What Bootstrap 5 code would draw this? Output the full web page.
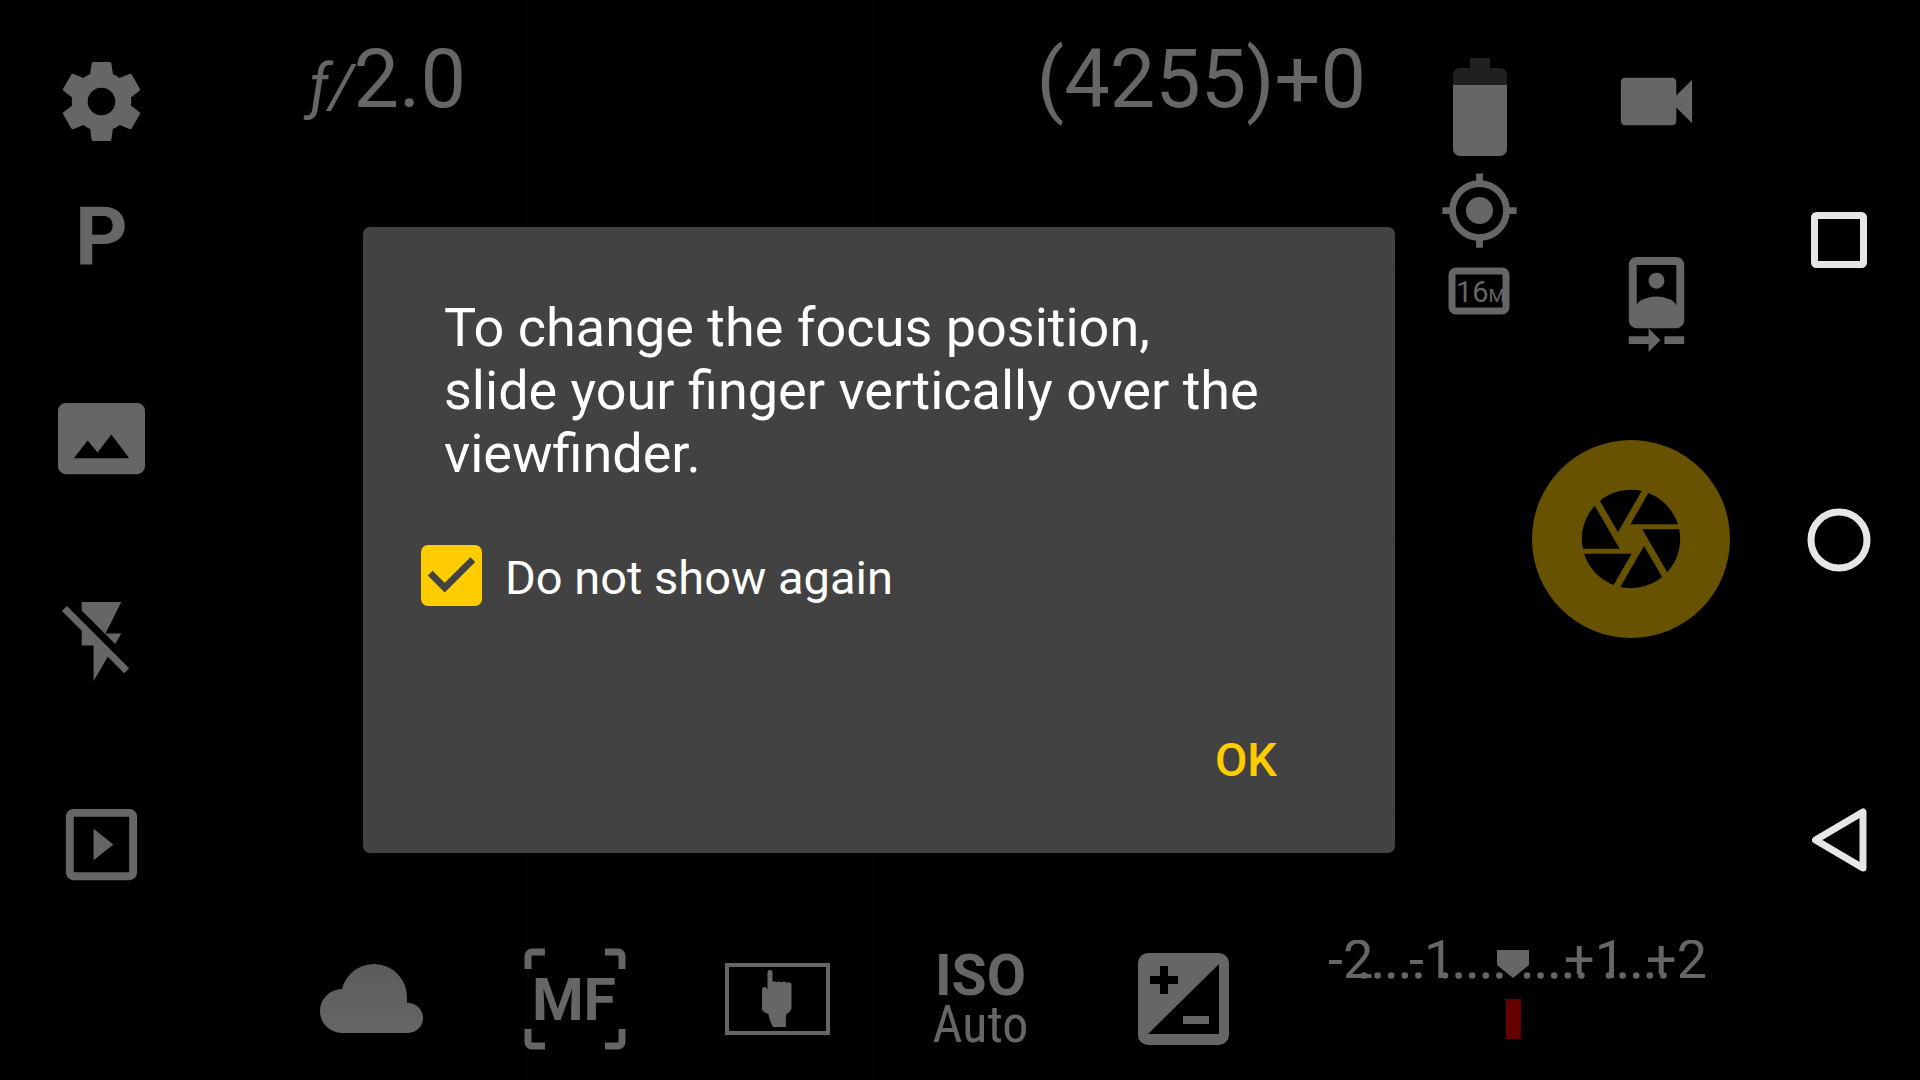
<!DOCTYPE html>
<html lang="en">
<head>
<meta charset="utf-8">
<meta name="viewport" content="width=device-width, initial-scale=1">
<title>Camera</title>
<link href="https://cdn.jsdelivr.net/npm/bootstrap@5.3.0/dist/css/bootstrap.min.css" rel="stylesheet">
<style>
  :root { --dim: #666; --accent: #fc0; --cell: 203px; }
  body { background: #000; color: var(--dim); font-family: Roboto, sans-serif; }
  svg { display: block; fill: currentColor; }
  .tool { background: none; border: 0; padding: 0; color: inherit; line-height: 1; display: flex; align-items: center; justify-content: center; width: var(--cell); flex-shrink: 0; }
  .tool-square { height: var(--cell); }
  .icon-lg { width: 95px; height: 95px; }
  .icon-md { width: 81px; height: 81px; }

  /* live preview behind the controls, with its faint thirds grid */
  .preview {
    left: 160px; right: 159px;
    background:
      linear-gradient(#000, #000) 0 25% / 100% 3px,
      linear-gradient(#000, #000) 0 50% / 100% 3px,
      linear-gradient(#000, #000) 0 75% / 100% 3px,
      linear-gradient(#000, #000) 25% 0 / 3px 100%,
      linear-gradient(#000, #000) 50% 0 / 3px 100%,
      linear-gradient(#000, #000) 75% 0 / 3px 100%,
      #020102;
    background-repeat: no-repeat;
  }
  .mode-btn { height: 134px; align-items: flex-start; font-size: 82px; font-weight: 700; line-height: 69px; }
  .readouts { padding: 32px 73px 0 106px; font-size: 81px; line-height: 96px; }
  .f-mark { font-size: 61px; font-style: italic; }
  .status { width: 81px; padding-top: 58px; gap: 13px; }
  .right-rail { width: 226px; margin-left: 12px; }
  .shutter { width: 198px; height: 198px; margin-top: 34px; border-radius: 50%; background: #665200; color: #000; }
  .bottom-bar { height: 163px; padding-left: 67px; }
  .iso-name { font-size: 57px; font-weight: 700; line-height: 50px; padding-top: 3px; }
  .iso-value { font-family: "Roboto Condensed", "Liberation Sans Narrow", Roboto, sans-serif; font-size: 52px; line-height: 48px; }
  .meter { margin-left: 35px; width: 400px; height: 117px; }
  .meter text { font-size: 54px; }
  .meter-dots { fill: none; stroke: currentColor; stroke-width: 6.6; stroke-linecap: round; stroke-dasharray: 0 13.6; }
  .sys-nav { width: 162px; color: #e6e6e6; }
  .sys-nav .tool { width: 100%; height: 300px; }
  .sys-nav svg { fill: none; stroke: currentColor; stroke-width: 7; stroke-linejoin: round; }

  .notice { width: 100%; max-width: 1032px; background: #424242; color: #fff; border-radius: 7px; padding: 69px 58px 41px; }
  .notice-text { margin: 0 69px 0 23px; font-size: 54px; line-height: 63px; }
  .notice .form-check { margin: 60px 0 0; padding: 0; gap: 23px; min-height: 61px; }
  .notice .form-check-input {
    float: none; margin: 0; width: 61px; height: 61px; border: 0; border-radius: 7px; background-size: 100%;
  }
  .notice .form-check-input:checked {
    background-color: var(--accent);
    background-image: url("data:image/svg+xml,%3Csvg xmlns='http://www.w3.org/2000/svg' viewBox='3 3 18 18'%3E%3Cpath fill='%23424242' d='M10 17l-5-5 1.41-1.41L10 14.17l7.59-7.59L19 8z'/%3E%3C/svg%3E");
  }
  .notice .form-check-label { padding-top: 4px; font-size: 47px; line-height: 57px; }
  .notice .btn { margin-right: 36px; padding: 24px; font-size: 47px; font-weight: 500; line-height: 56px; color: var(--accent); border: 0; }
  .notice-actions { margin-top: 102px; }
</style>
</head>
<body>
<div class="d-flex min-vh-100">
  <main class="position-relative d-flex flex-grow-1">
    <div class="preview position-absolute top-0 bottom-0"></div>

    <nav class="position-relative d-flex flex-column" aria-label="Modes">
      <button class="tool tool-square" type="button" aria-label="Settings">
        <svg class="icon-lg" viewBox="0 0 24 24"><path d="M19.43 12.98c.04-.32.07-.64.07-.98s-.03-.66-.07-.98l2.11-1.65c.19-.15.24-.42.12-.64l-2-3.46c-.12-.22-.39-.3-.61-.22l-2.49 1c-.52-.4-1.08-.73-1.69-.98l-.38-2.65C14.46 2.18 14.25 2 14 2h-4c-.25 0-.46.18-.49.42l-.38 2.65c-.61.25-1.17.59-1.69.98l-2.49-1c-.23-.09-.49 0-.61.22l-2 3.46c-.13.22-.07.49.12.64l2.11 1.65c-.04.32-.07.65-.07.98s.03.66.07.98l-2.11 1.65c-.19.15-.24.42-.12.64l2 3.46c.12.22.39.3.61.22l2.49-1c.52.4 1.08.73 1.69.98l.38 2.65c.03.24.24.42.49.42h4c.25 0 .46-.18.49-.42l.38-2.65c.61-.25 1.17-.59 1.69-.98l2.49 1c.23.09.49 0 .61-.22l2-3.46c.12-.22.07-.49-.12-.64l-2.11-1.65zM12 15.5c-1.93 0-3.5-1.57-3.5-3.5s1.57-3.5 3.5-3.5 3.5 1.57 3.5 3.5-1.57 3.5-3.5 3.5z"/></svg>
      </button>
      <button class="tool mode-btn" type="button">P</button>
      <button class="tool tool-square" type="button" aria-label="Scene">
        <svg class="icon-lg" viewBox="0 0 24 24"><path fill-rule="evenodd" d="M3 3h18a2 2 0 0 1 2 2v14a2 2 0 0 1-2 2H3a2 2 0 0 1-2-2V5a2 2 0 0 1 2-2zM5 17h14l-4.500-6-3.500 4.510-2.500-3.010z"/></svg>
      </button>
      <button class="tool tool-square" type="button" aria-label="Flash off">
        <svg class="icon-lg" viewBox="0 0 24 24"><path d="M3.270 3L2 4.270l5 5V13h3v9l3.580-6.140L17.730 20 19 18.730 3.270 3zM17 10h-4l4-8H7v2.180l8.460 8.460L17 10z"/></svg>
      </button>
      <button class="tool tool-square" type="button" aria-label="Gallery">
        <svg class="icon-lg" viewBox="0 0 24 24"><path d="M10 8v8l5-4-5-4zm9-5H5c-1.100 0-2 .9-2 2v14c0 1.100.9 2 2 2h14c1.100 0 2-.9 2-2V5c0-1.100-.9-2-2-2zm0 16H5V5h14v14z"/></svg>
      </button>
    </nav>

    <div class="position-relative d-flex flex-column flex-grow-1">
      <div class="d-flex flex-grow-1">
        <div class="readouts d-flex justify-content-between align-items-start flex-grow-1">
          <span><span class="f-mark">ƒ/</span>2.0</span>
          <span>(4255)+0</span>
        </div>

        <div class="status d-flex flex-column align-items-center">
          <svg width="54" height="99" viewBox="0 0 54 99" role="img" aria-label="Battery"><path fill="#212020" d="M17 0h20v10h10a7 7 0 0 1 7 7v10H0V17a7 7 0 0 1 7-7h10z"/><path d="M0 27h54v64a7 7 0 0 1-7 7H7a7 7 0 0 1-7-7z"/></svg>
          <div>
            <svg class="icon-md" viewBox="0 0 24 24" role="img" aria-label="Location on"><circle cx="12" cy="12" r="4"/><circle cx="12" cy="12" r="8" fill="none" stroke="currentColor" stroke-width="2"/><path d="M11 1h2v2.500h-2zM11 20.500h2V23h-2zM1 11h2.500v2H1zM20.500 11H23v2h-2.500z"/></svg>
            <svg class="icon-md" viewBox="0 0 81 81"><rect x="13" y="20" width="54" height="40" rx="4" fill="none" stroke="currentColor" stroke-width="7"/><text x="17" y="51" font-size="29">16<tspan font-size="19">M</tspan></text></svg>
          </div>
        </div>

        <div class="right-rail d-flex flex-column">
          <button class="tool tool-square align-self-end" type="button" aria-label="Video">
            <svg class="icon-lg" viewBox="0 0 24 24"><path d="M17 10.500V7c0-.55-.45-1-1-1H4c-.55 0-1 .45-1 1v10c0 .55.45 1 1 1h12c.55 0 1-.45 1-1v-3.500l4 4v-11l-4 4z"/></svg>
          </button>
          <button class="tool tool-square align-self-end" type="button" aria-label="Switch camera">
            <svg class="icon-lg" viewBox="0 0 24 24"><path d="M10 20H5v2h5v2l3-3-3-3v2zm4 0v2h5v-2h-5zM12 8c1.100 0 2-.9 2-2s-.9-2-1.990-2S10 4.900 10 6s.9 2 2 2zm5-8H7C5.900 0 5 .9 5 2v14c0 1.100.9 2 2 2h10c1.100 0 2-.9 2-2V2c0-1.100-.9-2-2-2zM7 2h10v10.500c0-1.670-3.330-2.500-5-2.500s-5 .83-5 2.500V2z"/></svg>
          </button>
          <button class="tool shutter" type="button" aria-label="Take photo">
            <svg width="118" height="118" viewBox="0 0 24 24"><path d="M9.400 10.500l4.770-8.260C13.470 2.090 12.750 2 12 2c-2.400 0-4.600.85-6.320 2.250l3.660 6.350.06-.1zM21.540 9c-.92-2.920-3.150-5.260-6-6.340L11.880 9h9.660zm.26 1h-7.490l.29.5 4.760 8.250C21 16.970 22 14.610 22 12c0-.69-.07-1.350-.2-2zM8.540 12l-3.900-6.750C3.010 7.030 2 9.390 2 12c0 .69.07 1.350.2 2h7.490l-1.150-2zm-6.080 3c.92 2.920 3.150 5.260 6 6.340L12.120 15H2.460zm11.270 0l-3.900 6.760c.7.15 1.420.24 2.170.24 2.400 0 4.600-.85 6.320-2.250l-3.660-6.350-.93 1.600z"/></svg>
          </button>
        </div>
      </div>

      <div class="bottom-bar d-flex align-items-center">
        <button class="tool" type="button" aria-label="White balance: cloudy">
          <svg width="103" height="70" viewBox="0 0 103 70"><defs><linearGradient id="sky" x2="0" y2="70" gradientUnits="userSpaceOnUse"><stop stop-color="#5c5c5c"/><stop offset="1" stop-color="#666"/></linearGradient></defs><g fill="url(#sky)"><circle cx="22" cy="47" r="22"/><circle cx="54" cy="33" r="33"/><circle cx="88" cy="54" r="15"/><path d="M22 35h65v34H22z"/></g></svg>
        </button>
        <button class="tool" type="button">
          <svg width="102" height="102" viewBox="0 0 102 102"><path fill="none" stroke="currentColor" stroke-width="7" d="M4 21V8a4 4 0 0 1 4-4h13M81 4h13a4 4 0 0 1 4 4v13M98 81v13a4 4 0 0 1-4 4H81M21 98H8a4 4 0 0 1-4-4V81"/><text x="50" y="72" text-anchor="middle" font-size="59" font-weight="700">MF</text></svg>
        </button>
        <button class="tool" type="button" aria-label="Touch to focus">
          <svg width="105" height="72" viewBox="0 0 105 72"><path fill="none" stroke="currentColor" stroke-width="4" d="M2 2h101v68H2z"/><path d="M42.500 9.500a2.500 2.500 0 0 1 5 0V19q2-1.500 4 .5 2-2 5 0 2-2 5 .3 2-1.300 5 .9V45q0 3-5 6-1 4-.5 13H48q-4-7-4.500-13-6-2-6.500-5V27q0-3 2.500-3t3 3z"/></svg>
        </button>
        <button class="tool flex-column" type="button"><span class="iso-name">ISO</span><span class="iso-value">Auto</span></button>
        <button class="tool" type="button" aria-label="Exposure compensation">
          <svg width="91" height="92" viewBox="0 0 91 92"><path fill-rule="evenodd" d="M10 0h71a10 10 0 0 1 10 10v72a10 10 0 0 1-10 10H10A10 10 0 0 1 0 82V10A10 10 0 0 1 10 0zM81 11L10 81h71zM22 13v10H12v8h10v10h8V31h10v-8H30V13z"/><path d="M45 63h26v8H45z"/></svg>
        </button>
        <svg class="meter" viewBox="0 0 400 117">
          <text x="8" y="38">-2</text><text x="89" y="38">-1</text><text x="244" y="38">+1</text><text x="326" y="38">+2</text>
          <path class="meter-dots" d="M44 35.500h55M125 35.500h55M207 35.500h55M289 35.500h55"/>
          <path d="M177 10h32v15l-16 13-16-13z"/><path fill="#600" d="M186 59h15v40h-15z"/>
        </svg>
      </div>
    </div>

    <div class="position-absolute top-0 bottom-0 start-0 end-0 d-flex align-items-center justify-content-center">
      <section class="notice d-flex flex-column" role="dialog" aria-labelledby="notice-text">
        <p class="notice-text" id="notice-text">To change the focus position, slide your finger vertically over the viewfinder.</p>
        <div class="form-check d-flex align-items-center">
          <input class="form-check-input" type="checkbox" id="hide-notice" checked>
          <label class="form-check-label" for="hide-notice">Do not show again</label>
        </div>
        <div class="notice-actions d-flex justify-content-end"><button class="btn" type="button">OK</button></div>
      </section>
    </div>
  </main>

  <nav class="sys-nav d-flex flex-column justify-content-center flex-shrink-0" aria-label="System">
    <button class="tool" type="button" aria-label="Recent apps"><svg width="64" height="64" viewBox="0 0 64 64"><rect x="7.500" y="7.500" width="49" height="49" rx="2"/></svg></button>
    <button class="tool" type="button" aria-label="Home"><svg width="64" height="64" viewBox="0 0 64 64"><circle cx="32" cy="32" r="28"/></svg></button>
    <button class="tool" type="button" aria-label="Back"><svg width="64" height="64" viewBox="0 0 64 64"><path d="M56 4v56L8.500 32z"/></svg></button>
  </nav>
</div>
<script src="https://cdn.jsdelivr.net/npm/bootstrap@5.3.0/dist/js/bootstrap.bundle.min.js"></script>
</body>
</html>
